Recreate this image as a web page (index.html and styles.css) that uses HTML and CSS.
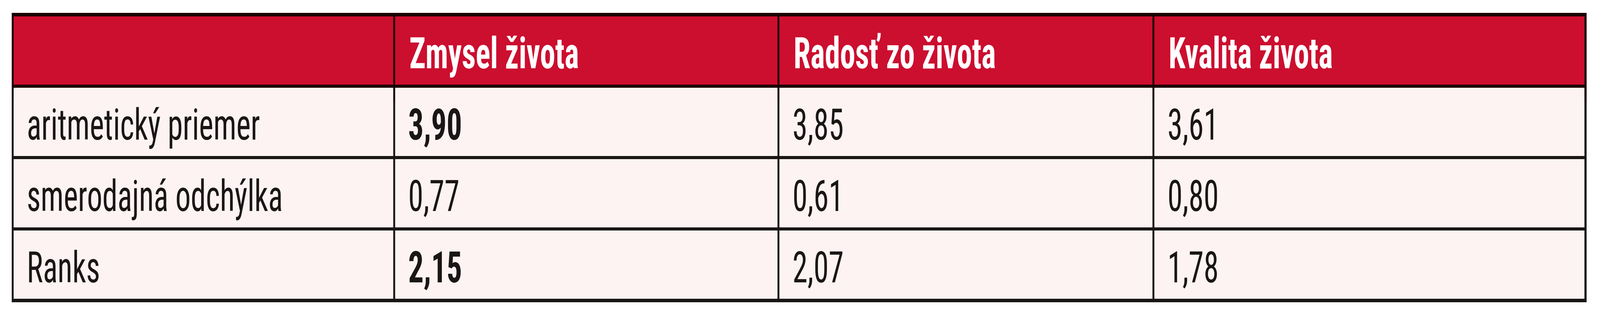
FILE: index.html
```html
<!DOCTYPE html>
<html lang="sk">
<head>
<meta charset="utf-8">
<title>Tabuľka</title>
<link rel="stylesheet" href="styles.css">
</head>
<body>
<div class="frame">
  <div class="page">
    <div class="table">
      <div class="cell head"></div>
      <div class="cell head">Zmysel života</div>
      <div class="cell head">Radosť zo života</div>
      <div class="cell head">Kvalita života</div>

      <div class="cell">aritmetický priemer</div>
      <div class="cell"><strong>3,90</strong></div>
      <div class="cell">3,85</div>
      <div class="cell">3,61</div>

      <div class="cell">smerodajná odchýlka</div>
      <div class="cell">0,77</div>
      <div class="cell">0,61</div>
      <div class="cell">0,80</div>

      <div class="cell">Ranks</div>
      <div class="cell"><strong>2,15</strong></div>
      <div class="cell">2,07</div>
      <div class="cell">1,78</div>
    </div>
  </div>
</div>
</body>
</html>
```
FILE: styles.css
```css
html, body {
  margin: 0;
  background: #ffffff;
}
body {
  font-family: "Roboto", "Liberation Sans", sans-serif;
  font-stretch: 75%;
}
.frame {
  width: 100%;
  height: 800px;
  overflow: hidden;
}
.page {
  width: 5867px;
  box-sizing: border-box;
  padding: 33px 0 0 43px;
  transform-origin: 0 0;
}
@media (max-width: 5866px) {
  .page {
    transform: scaleX(0.69813);
  }
}
.table {
  display: grid;
  grid-template-columns: 1392px 1402px 1368px 1577px;
  grid-template-rows: repeat(4, 175px);
  column-gap: 7px;
  row-gap: 8px;
  padding: 9px 8px 9px 7px;
  width: max-content;
  background: linear-gradient(#1c0303 0 226px, #1a1615 226px);
}
.cell {
  display: flex;
  align-items: center;
  padding: 14px 0 0 48px;
  box-sizing: border-box;
  background: #fdf3f3;
  color: #1a1616;
  font-size: 112px;
  white-space: nowrap;
}
.cell strong {
  font-weight: 700;
}
.head {
  background: #cc0e2f;
  color: #ffffff;
  font-weight: 700;
  padding-left: 52px;
}
```
